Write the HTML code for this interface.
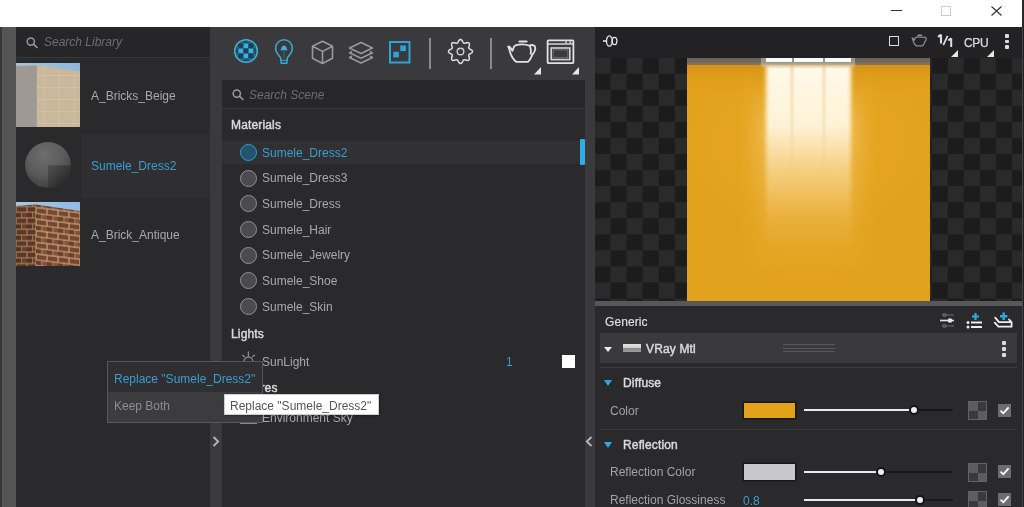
<!DOCTYPE html>
<html><head><meta charset="utf-8">
<style>
*{margin:0;padding:0;box-sizing:border-box}
html,body{width:1024px;height:507px;overflow:hidden;background:#2a292b;font-family:"Liberation Sans",sans-serif}
.a{position:absolute}
.t{will-change:transform;position:absolute;font-size:12px;line-height:14px;white-space:nowrap;color:#a9a9a9}
svg{position:absolute;overflow:visible}
</style></head><body>
<!-- title bar -->
<div class="a" style="left:0;top:0;width:1024px;height:27px;background:#fff"></div>
<div class="a" style="left:891px;top:10px;width:11px;height:1px;background:#333"></div>
<div class="a" style="left:941px;top:6px;width:10px;height:10px;border:1px solid #ccc"></div>
<svg style="left:991px;top:6px" width="11" height="10"><path d="M0.5 0.5L10.5 9.5M10.5 0.5L0.5 9.5" stroke="#333" stroke-width="1.1"/></svg>
<div class="a" style="left:1022px;top:0;width:2px;height:27px;background:#2a2a2a"></div>

<!-- left strip -->
<div class="a" style="left:0;top:27px;width:16px;height:480px;background:#555"></div>
<div class="a" style="left:0;top:27px;width:2px;height:480px;background:#383838"></div>

<!-- library panel -->
<div class="a" style="left:16px;top:27px;width:194px;height:480px;background:#2a292b"></div>
<div class="a" style="left:16px;top:27px;width:194px;height:30px;background:#262527"></div>
<div class="a" style="left:16px;top:57px;width:194px;height:1px;background:#38373a"></div>

<!-- library search -->
<svg style="left:26px;top:37px" width="14" height="12"><circle cx="4.8" cy="4.6" r="3.6" fill="none" stroke="#9a9a9a" stroke-width="1.5"/><path d="M7.4 7.2L11.5 11" stroke="#9a9a9a" stroke-width="1.6"/></svg>
<div class="t" style="left:44px;top:35px;font-style:italic;color:#6e6d6f">Search Library</div>
<!-- row1 -->
<svg style="left:16px;top:63px" width="64" height="64" viewBox="0 0 64 64">
 <defs><linearGradient id="sky1" x1="0" y1="0" x2="1" y2="0.3"><stop offset="0" stop-color="#a9c2d6"/><stop offset="1" stop-color="#8db6df"/></linearGradient>
 <pattern id="bb" width="30" height="12" patternUnits="userSpaceOnUse" x="21" y="1"><path d="M0 11.5H30M7 0V11.5M22 0V11.5" stroke="#ddd1b8" stroke-width="0.9" fill="none" opacity="0.45"/></pattern></defs>
 <rect width="64" height="64" fill="url(#sky1)"/>
 <path d="M20.8 2.3L64 8.5V64H20.8Z" fill="#c9b899"/>
 <path d="M20.8 2.3L64 8.5V64H20.8Z" fill="url(#bb)"/>
 <path d="M0 3L20.8 2.3V64H0Z" fill="#9e9a93"/>
 
</svg>
<div class="t" style="left:91px;top:89px">A_Bricks_Beige</div>
<!-- row2 selected -->
<div class="a" style="left:82px;top:134px;width:128px;height:64px;background:#2f2e31"></div>
<svg style="left:25px;top:141.5px" width="46" height="46" viewBox="0 0 46 46">
 <defs><radialGradient id="sph" cx="0.42" cy="0.28" r="0.8"><stop offset="0" stop-color="#6e6e6e"/><stop offset="0.55" stop-color="#5a5a5a"/><stop offset="1" stop-color="#3a3a3a"/></radialGradient>
 <linearGradient id="sphq" x1="0.1" y1="0.1" x2="0.9" y2="0.9"><stop offset="0" stop-color="#4c4c4c"/><stop offset="0.6" stop-color="#333"/><stop offset="1" stop-color="#222"/></linearGradient></defs>
 <circle cx="23" cy="23" r="22.9" fill="url(#sph)"/>
 <path d="M23 23.3H45.9A22.9 22.9 0 0 1 23 45.9Z" fill="url(#sphq)"/>
</svg>
<div class="t" style="left:91px;top:159px;color:#3a9dd1">Sumele_Dress2</div>
<!-- row3 -->
<svg style="left:16px;top:202px" width="64" height="64" viewBox="0 0 64 64">
 <defs><linearGradient id="sky3" x1="0" y1="0" x2="1" y2="0"><stop offset="0" stop-color="#a8c6df"/><stop offset="1" stop-color="#8fbbe6"/></linearGradient>
 <pattern id="brL" width="11" height="11.4" patternUnits="userSpaceOnUse" x="0" y="4.5"><rect width="11" height="11.4" fill="#b39372"/><rect x="0.6" y="0.6" width="9.8" height="4.6" fill="#6a3d28"/><rect x="6" y="6.3" width="9.8" height="4.5" fill="#77472f"/><rect x="-4.6" y="6.3" width="9.8" height="4.5" fill="#633823"/></pattern>
 <pattern id="brR" width="11" height="11.6" patternUnits="userSpaceOnUse" x="20" y="3" patternTransform="skewY(7)"><rect width="11" height="11.6" fill="#c2a27a"/><rect x="0.6" y="0.7" width="9.8" height="4.7" fill="#774530"/><rect x="6.1" y="6.5" width="9.8" height="4.5" fill="#84513a"/><rect x="-4.9" y="6.5" width="10.3" height="4.5" fill="#6d3e2a"/></pattern></defs>
 <rect width="64" height="64" fill="url(#sky3)"/>
 <path d="M0 4L20 2.5V64H0Z" fill="url(#brL)"/>
 <path d="M20 2.5L64 9V64H20Z" fill="url(#brR)"/>
 <path d="M0 4L20 2.5V64H0Z" fill="#000" opacity="0.1"/>
 <path d="M19.5 2.5V64" stroke="#c9a878" stroke-width="1" opacity="0.45"/>
</svg>
<div class="t" style="left:91px;top:228px">A_Brick_Antique</div>

<!-- splitter 1 -->
<div class="a" style="left:210px;top:27px;width:12px;height:480px;background:#3a393b"></div>
<svg style="left:212px;top:436px" width="8" height="11"><path d="M1.5 1L6.2 5.5L1.5 10" fill="none" stroke="#b8b8b8" stroke-width="1.8"/></svg>

<!-- scene toolbar -->
<div class="a" style="left:210px;top:27px;width:385px;height:53px;background:#3a393b"></div>
<!-- scene panel -->
<div class="a" style="left:222px;top:80px;width:363px;height:427px;background:#2a292b"></div>
<div class="a" style="left:222px;top:80px;width:363px;height:28px;background:#272628"></div>
<div class="a" style="left:222px;top:108px;width:363px;height:1px;background:#38373a"></div>
<svg style="left:232px;top:89px" width="14" height="12"><circle cx="4.8" cy="4.6" r="3.6" fill="none" stroke="#9a9a9a" stroke-width="1.5"/><path d="M7.4 7.2L11.5 11" stroke="#9a9a9a" stroke-width="1.6"/></svg>
<div class="t" style="left:249px;top:88px;font-style:italic;color:#6e6d6f">Search Scene</div>
<div class="t" style="left:231px;top:118px;color:#dadada;-webkit-text-stroke:0.45px #dadada;letter-spacing:0.15px">Materials</div>
<div class="a" style="left:222px;top:141px;width:358px;height:23px;background:#313033"></div>
<div class="a" style="left:580px;top:139px;width:5px;height:26px;background:#2eaee6;border-radius:1px"></div>
<div class="a" style="left:240px;top:143.8px;width:17px;height:17px;border-radius:50%;border:1.5px solid #2f9fd4;background:#24536c"></div>
<div class="t" style="left:262px;top:145.7px;color:#3a9dd1">Sumele_Dress2</div>
<div class="a" style="left:240px;top:169.5px;width:17px;height:17px;border-radius:50%;border:1.3px solid #929193;background:#4b4a4c"></div>
<div class="t" style="left:262px;top:171.4px;color:#a9a9a9">Sumele_Dress3</div>
<div class="a" style="left:240px;top:195.1px;width:17px;height:17px;border-radius:50%;border:1.3px solid #929193;background:#4b4a4c"></div>
<div class="t" style="left:262px;top:197.0px;color:#a9a9a9">Sumele_Dress</div>
<div class="a" style="left:240px;top:220.8px;width:17px;height:17px;border-radius:50%;border:1.3px solid #929193;background:#4b4a4c"></div>
<div class="t" style="left:262px;top:222.7px;color:#a9a9a9">Sumele_Hair</div>
<div class="a" style="left:240px;top:246.5px;width:17px;height:17px;border-radius:50%;border:1.3px solid #929193;background:#4b4a4c"></div>
<div class="t" style="left:262px;top:248.4px;color:#a9a9a9">Sumele_Jewelry</div>
<div class="a" style="left:240px;top:272.2px;width:17px;height:17px;border-radius:50%;border:1.3px solid #929193;background:#4b4a4c"></div>
<div class="t" style="left:262px;top:274.1px;color:#a9a9a9">Sumele_Shoe</div>
<div class="a" style="left:240px;top:297.8px;width:17px;height:17px;border-radius:50%;border:1.3px solid #929193;background:#4b4a4c"></div>
<div class="t" style="left:262px;top:299.7px;color:#a9a9a9">Sumele_Skin</div>
<div class="t" style="left:231px;top:327px;color:#dadada;-webkit-text-stroke:0.45px #dadada;letter-spacing:0.15px">Lights</div>
<svg style="left:238px;top:349px" width="20" height="14" viewBox="0 0 20 14">
 <path d="M6 12.5A4.4 4.4 0 0 1 14.8 12.5" fill="none" stroke="#8e8d8f" stroke-width="1.3"/>
 <path d="M10.4 2.8V7M4.6 6.2L6.4 7.8M16.4 6.2L14.6 7.8" stroke="#8e8d8f" stroke-width="1.3" stroke-linecap="round"/>
</svg>
<div class="t" style="left:262px;top:355px">SunLight</div>
<div class="t" style="left:506px;top:355px;color:#3a9dd1">1</div>
<div class="a" style="left:562px;top:355px;width:13px;height:13px;background:#fff"></div>
<div class="t" style="left:231px;top:381px;color:#dadada;-webkit-text-stroke:0.45px #dadada;letter-spacing:0.15px">Textures</div>
<div class="a" style="left:240px;top:411px;width:17px;height:13px;border:1.5px solid #8a8a8a"></div>
<div class="t" style="left:262px;top:411px">Environment Sky</div>

<!-- splitter 2 -->
<div class="a" style="left:585px;top:27px;width:10px;height:480px;background:#3a393b"></div>
<svg style="left:585px;top:436px" width="8" height="11"><path d="M6.5 1L1.8 5.5L6.5 10" fill="none" stroke="#b8b8b8" stroke-width="1.8"/></svg>

<!-- popup menu -->
<div class="a" style="left:107px;top:361px;width:156px;height:62px;background:#3c3b3d;border:1px solid #58575a"></div>
<div class="a" style="left:108px;top:362px;width:154px;height:30px;background:#2f2e30"></div>
<div class="t" style="left:114px;top:372px;color:#3a9dd1">Replace "Sumele_Dress2"</div>
<div class="t" style="left:114px;top:399px;color:#8e8d8f">Keep Both</div>
<!-- tooltip -->
<div class="a" style="left:224px;top:394px;width:155px;height:21px;background:#fff;border:1px solid #cfcfcf;box-shadow:1px 1px 2px rgba(0,0,0,.3)"></div>
<div class="t" style="left:230px;top:398.6px;color:#555">Replace "Sumele_Dress2"</div>

<!-- right panel -->
<div class="a" style="left:595px;top:27px;width:427px;height:31px;background:#222123"></div>
<svg style="left:595px;top:58px" width="427" height="243"><defs><pattern id="chk" width="32.12" height="32.12" patternUnits="userSpaceOnUse" x="-0.55" y="-0.4"><rect width="32.12" height="32.12" fill="#2a2a2b"/><rect x="16.06" y="0" width="16.06" height="16.06" fill="#1c1c1d"/><rect x="0" y="16.06" width="16.06" height="16.06" fill="#1c1c1d"/></pattern></defs><rect width="427" height="243" fill="url(#chk)"/></svg>
<!-- render -->
<div class="a" style="left:687px;top:58px;width:243px;height:243px;background:#e3a21d;overflow:hidden">
  <div class="a" style="left:-40px;top:0;width:323px;height:243px;background:radial-gradient(ellipse 55% 50% at 50% 35%,rgba(236,170,38,.6),rgba(236,170,38,0) 70%)"></div>
  <div class="a" style="left:0;top:0;width:243px;height:36px;background:linear-gradient(rgba(175,110,10,.4),rgba(190,120,15,.12) 50%,rgba(200,128,15,0))"></div>
  <div class="a" style="left:66px;top:20px;width:110px;height:200px;filter:blur(9px);background:linear-gradient(rgba(250,215,140,0),rgba(250,215,140,.4) 25%,rgba(245,200,110,.3) 55%,rgba(240,190,90,0))"></div>
  <div class="a" style="left:79px;top:5px;width:85px;height:190px;filter:blur(2px);background:linear-gradient(rgba(255,250,235,1),rgba(255,246,224,.95) 32%,rgba(250,222,165,.66) 56%,rgba(245,200,110,.25) 80%,rgba(240,190,90,0))"></div>
  <div class="a" style="left:104px;top:6px;width:2px;height:120px;filter:blur(0.8px);background:linear-gradient(rgba(225,180,95,.6),rgba(225,180,95,0))"></div>
  <div class="a" style="left:136px;top:6px;width:2px;height:120px;filter:blur(0.8px);background:linear-gradient(rgba(225,180,95,.6),rgba(225,180,95,0))"></div>
  <div class="a" style="left:0;top:0;width:243px;height:7px;background:linear-gradient(#6a5f53,#7b6d5c 70%,#8a7658)"></div>
  <div class="a" style="left:74px;top:0;width:94px;height:6.5px;background:#9a968f"></div>
  <div class="a" style="left:74px;top:6px;width:94px;height:3px;filter:blur(1px);background:rgba(215,185,130,.8)"></div>
  <div class="a" style="left:78.5px;top:0.3px;width:26.5px;height:4px;background:#f9f9f7"></div>
  <div class="a" style="left:106.5px;top:0.3px;width:29.5px;height:4px;background:#f9f9f7"></div>
  <div class="a" style="left:138px;top:0.3px;width:26px;height:4px;background:#f9f9f7"></div>
</div>
<div class="a" style="left:595px;top:301px;width:427px;height:5px;background:#58575a"></div>
<!-- right toolbar icons -->
<svg style="left:600px;top:32px" width="20" height="18" viewBox="0 0 20 18">
 <path d="M3 9H6.5" stroke="#e6e6e6" stroke-width="1.6"/>
 <ellipse cx="9.4" cy="9" rx="2.9" ry="5.2" fill="none" stroke="#e6e6e6" stroke-width="1.3"/>
 <path d="M10.2 5.5A2 3.6 0 0 1 10.2 12.5" fill="none" stroke="#8a8a8a" stroke-width="1"/>
 <ellipse cx="14.5" cy="9" rx="2.4" ry="3.6" fill="none" stroke="#e6e6e6" stroke-width="1.3"/>
</svg>
<div class="a" style="left:889px;top:36px;width:10px;height:10px;border:1.4px solid #dcdcdc"></div>
<svg style="left:911px;top:33.5px" width="16.6" height="13" viewBox="0 0 32 25">
 <path d="M13.5 2.5H20.5" stroke="#8c8c8c" stroke-width="3" stroke-linecap="round"/>
 <path d="M2.2 7.5C4 7.3 5 9 6.5 11.8L8.2 7.3C11 4.8 19.5 4.8 23.5 6.8C24.8 5.8 26.5 5.8 28 6.6C30.2 8 29.5 12 26.3 15.8C25 18.5 24.5 21 22 22.8H10.2C7.5 21 4.5 16 3.8 12C3.3 10 3 8.8 2.2 7.5Z" fill="none" stroke="#8c8c8c" stroke-width="2.5" stroke-linejoin="round"/>
</svg>
<svg style="left:930px;top:30px" width="30" height="20" viewBox="930 30 30 20">
 <path d="M941 34.4V43.4M938 36.8L941 34.6" fill="none" stroke="#dedede" stroke-width="2.1"/>
 <path d="M943.3 45.2L947.6 35.8" fill="none" stroke="#dedede" stroke-width="1.7"/>
 <path d="M951.2 38.2V46.9M948.2 40.5L951.2 38.4" fill="none" stroke="#dedede" stroke-width="2"/>
</svg>

<div class="t" style="left:963.5px;top:36px;font-size:12px;color:#ddd;-webkit-text-stroke:0.25px #ddd;letter-spacing:-0.3px">CPU</div>
<svg style="left:951px;top:50px" width="8" height="8"><path d="M7 0V7H0Z" fill="#e6e6e6"/></svg>
<svg style="left:987px;top:50px" width="8" height="8"><path d="M7 0V7H0Z" fill="#e6e6e6"/></svg>
<div class="a" style="left:1005px;top:34px;width:4px;height:3.5px;background:#ddd;border-radius:1px"></div>
<div class="a" style="left:1005px;top:39.5px;width:4px;height:3.5px;background:#ddd;border-radius:1px"></div>
<div class="a" style="left:1005px;top:45px;width:4px;height:3.5px;background:#ddd;border-radius:1px"></div>

<!-- properties -->
<div class="a" style="left:595px;top:306px;width:427px;height:201px;background:#2a292b"></div>
<div class="t" style="left:605px;top:314.6px;color:#dedede;-webkit-text-stroke:0.2px #dedede;letter-spacing:0.1px">Generic</div>
<div class="a" style="left:600px;top:333px;width:417px;height:30px;background:#3a393b"></div>
<svg style="left:604px;top:347px" width="8" height="5"><path d="M0 0H8L4 5Z" fill="#eee"/></svg>
<div class="a" style="left:623px;top:344px;width:18px;height:8px;background:linear-gradient(#e2e2e2,#d0d0d0 45%,#8c8c8c 50%,#9c9c9c)"></div>
<div class="t" style="left:646px;top:342px;color:#dadada;-webkit-text-stroke:0.45px #dadada;letter-spacing:0.15px">VRay Mtl</div>
<div class="a" style="left:783px;top:344px;width:52px;height:1px;background:#58575a"></div>
<div class="a" style="left:783px;top:347.5px;width:52px;height:1px;background:#58575a"></div>
<div class="a" style="left:783px;top:351px;width:52px;height:1px;background:#58575a"></div>
<div class="a" style="left:1002px;top:341px;width:4px;height:3.5px;background:#ddd;border-radius:1px"></div>
<div class="a" style="left:1002px;top:347px;width:4px;height:3.5px;background:#ddd;border-radius:1px"></div>
<div class="a" style="left:1002px;top:353px;width:4px;height:3.5px;background:#ddd;border-radius:1px"></div>
<div class="a" style="left:600px;top:367px;width:417px;height:1px;background:#3a393b"></div>
<svg style="left:604px;top:380px" width="8" height="6"><path d="M0 0H8L4 6Z" fill="#2ea8e3"/></svg>
<div class="t" style="left:623px;top:376px;color:#dadada;-webkit-text-stroke:0.45px #dadada;letter-spacing:0.15px">Diffuse</div>
<div class="t" style="left:610px;top:404px;color:#a3a3a4">Color</div>
<div class="a" style="left:743.5px;top:402.5px;width:51.5px;height:15.5px;background:#e3a21a;box-shadow:0 0 0 1.5px #181818"></div>
<div class="a" style="left:804px;top:409px;width:109.5px;height:2px;background:#eaeaea"></div>
<div class="a" style="left:913.5px;top:409px;width:39.5px;height:1.5px;background:#19191a"></div>
<div class="a" style="left:910.5px;top:407px;width:6px;height:6px;border-radius:50%;background:#eee;box-shadow:0 0 0 2px #151515"></div>
<div class="a" style="left:968px;top:401px;width:19px;height:19px;background:#5d5c5e;border:1px solid #636264"></div>
<div class="a" style="left:977.5px;top:402px;width:8.5px;height:8.5px;background:#3a393b"></div>
<div class="a" style="left:969px;top:410.5px;width:8.5px;height:8.5px;background:#3a393b"></div>
<div class="a" style="left:998px;top:404px;width:13px;height:13px;background:#6d6c6e"></div>
<svg style="left:998px;top:404px" width="13" height="13"><path d="M2.6 6.6L5.3 9.3L10.6 3.3" fill="none" stroke="#fff" stroke-width="1.8"/></svg>
<div class="a" style="left:600px;top:429px;width:417px;height:1px;background:#3a393b"></div>
<svg style="left:604px;top:441.5px" width="8" height="6"><path d="M0 0H8L4 6Z" fill="#2ea8e3"/></svg>
<div class="t" style="left:623px;top:437.5px;color:#dadada;-webkit-text-stroke:0.45px #dadada;letter-spacing:0.15px">Reflection</div>
<div class="t" style="left:610px;top:465px;color:#a3a3a4">Reflection Color</div>
<div class="a" style="left:743.5px;top:464px;width:51.5px;height:15.5px;background:#c8c7c9;box-shadow:0 0 0 1.5px #181818"></div>
<div class="a" style="left:804px;top:471px;width:77px;height:2px;background:#eaeaea"></div>
<div class="a" style="left:881px;top:471px;width:72px;height:1.5px;background:#19191a"></div>
<div class="a" style="left:878.0px;top:469.0px;width:6px;height:6px;border-radius:50%;background:#eee;box-shadow:0 0 0 2px #151515"></div>
<div class="a" style="left:968px;top:463px;width:19px;height:19px;background:#5d5c5e;border:1px solid #636264"></div>
<div class="a" style="left:977.5px;top:464px;width:8.5px;height:8.5px;background:#3a393b"></div>
<div class="a" style="left:969px;top:472.5px;width:8.5px;height:8.5px;background:#3a393b"></div>
<div class="a" style="left:998px;top:465px;width:13px;height:13px;background:#6d6c6e"></div>
<svg style="left:998px;top:465px" width="13" height="13"><path d="M2.6 6.6L5.3 9.3L10.6 3.3" fill="none" stroke="#fff" stroke-width="1.8"/></svg>
<div class="t" style="left:610px;top:493px;color:#a3a3a4">Reflection Glossiness</div>
<div class="t" style="left:743px;top:493.5px;color:#3a9dd1">0.8</div>
<div class="a" style="left:804px;top:499px;width:116px;height:2px;background:#eaeaea"></div>
<div class="a" style="left:920px;top:499px;width:33px;height:1.5px;background:#19191a"></div>
<div class="a" style="left:917.0px;top:497.0px;width:6px;height:6px;border-radius:50%;background:#eee;box-shadow:0 0 0 2px #151515"></div>
<div class="a" style="left:968px;top:491px;width:19px;height:19px;background:#5d5c5e;border:1px solid #636264"></div>
<div class="a" style="left:977.5px;top:492px;width:8.5px;height:8.5px;background:#3a393b"></div>
<div class="a" style="left:969px;top:500.5px;width:8.5px;height:8.5px;background:#3a393b"></div>
<div class="a" style="left:998px;top:493px;width:13px;height:13px;background:#6d6c6e"></div>
<svg style="left:998px;top:493px" width="13" height="13"><path d="M2.6 6.6L5.3 9.3L10.6 3.3" fill="none" stroke="#fff" stroke-width="1.8"/></svg>

<!-- scene toolbar icons -->
<svg style="left:233px;top:38px" width="26" height="26" viewBox="0 0 26 26">
 <defs><clipPath id="cc"><circle cx="13" cy="13" r="10.2"/></clipPath></defs>
 <g clip-path="url(#cc)"><rect x="0.5" y="0.5" width="5" height="5" fill="#1f5573"/><rect x="5.5" y="0.5" width="5" height="5" fill="#2c8fbf"/><rect x="10.5" y="0.5" width="5" height="5" fill="#1f5573"/><rect x="15.5" y="0.5" width="5" height="5" fill="#2c8fbf"/><rect x="20.5" y="0.5" width="5" height="5" fill="#1f5573"/><rect x="0.5" y="5.5" width="5" height="5" fill="#2c8fbf"/><rect x="5.5" y="5.5" width="5" height="5" fill="#1b3f53"/><rect x="10.5" y="5.5" width="5" height="5" fill="#36b0e6"/><rect x="15.5" y="5.5" width="5" height="5" fill="#1b3f53"/><rect x="20.5" y="5.5" width="5" height="5" fill="#2c8fbf"/><rect x="0.5" y="10.5" width="5" height="5" fill="#1f5573"/><rect x="5.5" y="10.5" width="5" height="5" fill="#36b0e6"/><rect x="10.5" y="10.5" width="5" height="5" fill="#1b3f53"/><rect x="15.5" y="10.5" width="5" height="5" fill="#36b0e6"/><rect x="20.5" y="10.5" width="5" height="5" fill="#1f5573"/><rect x="0.5" y="15.5" width="5" height="5" fill="#2c8fbf"/><rect x="5.5" y="15.5" width="5" height="5" fill="#1b3f53"/><rect x="10.5" y="15.5" width="5" height="5" fill="#36b0e6"/><rect x="15.5" y="15.5" width="5" height="5" fill="#1b3f53"/><rect x="20.5" y="15.5" width="5" height="5" fill="#2c8fbf"/><rect x="0.5" y="20.5" width="5" height="5" fill="#1f5573"/><rect x="5.5" y="20.5" width="5" height="5" fill="#2c8fbf"/><rect x="10.5" y="20.5" width="5" height="5" fill="#1f5573"/><rect x="15.5" y="20.5" width="5" height="5" fill="#2c8fbf"/><rect x="20.5" y="20.5" width="5" height="5" fill="#1f5573"/></g>
 <circle cx="13" cy="13" r="9.6" fill="none" stroke="#1a3a4c" stroke-width="0.8" opacity="0.6"/>
 <circle cx="13" cy="13" r="11.3" fill="none" stroke="#3fb0e0" stroke-width="1.5"/>
</svg>
<svg style="left:273px;top:38px" width="22" height="27" viewBox="0 0 22 27">
 <path d="M8.3 25.3L7.6 19.8C7.2 18.2 2.6 15.5 2.6 10.2A8.4 8.4 0 0 1 19.4 10.2C19.4 15.5 14.8 18.2 14.4 19.8L13.7 25.3Z" fill="none" stroke="#36a9df" stroke-width="1.5" stroke-linejoin="round"/>
 <path d="M8 22.3H14" stroke="#36a9df" stroke-width="1.1"/>
 <path d="M7.2 12.2H14.8L13.6 10.5C13.4 9 12.5 7.6 11 7.6S8.6 9 8.4 10.5Z" fill="#3cb3e8"/>
 <path d="M11 13V20" stroke="#3a6f8c" stroke-width="1"/>
</svg>
<svg style="left:311px;top:40px" width="23" height="25" viewBox="0 0 23 25">
 <path d="M11.5 1.2L21.5 6.2V18.3L11.5 23.5L1.5 18.3V6.2Z M1.5 6.2L11.5 11.4L21.5 6.2 M11.5 11.4V23.5" fill="none" stroke="#9a999b" stroke-width="1.6" stroke-linejoin="round"/>
</svg>
<svg style="left:347px;top:41px" width="28" height="23" viewBox="0 0 28 23">
 <path d="M14 1.5L25.5 7L14 12.5L2.5 7Z" fill="none" stroke="#9a999b" stroke-width="1.5" stroke-linejoin="round"/>
 <path d="M5 10.5L2.5 11.8L14 17.3L25.5 11.8L23 10.5" fill="none" stroke="#9a999b" stroke-width="1.5" stroke-linejoin="round"/>
 <path d="M5 15.3L2.5 16.5L14 22L25.5 16.5L23 15.3" fill="none" stroke="#9a999b" stroke-width="1.5" stroke-linejoin="round"/>
</svg>
<svg style="left:388px;top:40px" width="23" height="24" viewBox="0 0 23 24">
 <rect x="2" y="2" width="19.5" height="20.5" fill="none" stroke="#2ea3db" stroke-width="2"/>
 <rect x="12.3" y="5.5" width="5.6" height="5.6" fill="#2ea3db"/>
 <rect x="5.3" y="11.8" width="5.6" height="5.6" fill="#2ea3db"/>
</svg>
<div class="a" style="left:429px;top:37.5px;width:2px;height:31.5px;background:#8a898b"></div>
<svg style="left:446px;top:37px" width="29" height="29" viewBox="0 0 29 29">
 <path id="gear" fill="none" stroke="#e0e0e0" stroke-width="1.5" stroke-linejoin="round" d="M26.50 14.50L26.46 14.81L26.34 15.12L26.15 15.42L25.90 15.70L25.59 15.96L25.25 16.20L24.88 16.42L24.52 16.63L24.16 16.82L23.82 17.00L23.53 17.17L23.27 17.35L23.07 17.54L22.92 17.73L22.81 17.94L22.74 18.17L22.71 18.42L22.72 18.69L22.77 18.99L22.86 19.33L22.97 19.69L23.09 20.08L23.20 20.48L23.30 20.90L23.37 21.31L23.41 21.71L23.39 22.09L23.31 22.43L23.18 22.74L22.99 22.99L22.74 23.18L22.43 23.31L22.09 23.39L21.71 23.41L21.31 23.37L20.90 23.30L20.48 23.20L20.08 23.09L19.69 22.97L19.33 22.86L18.99 22.77L18.69 22.72L18.42 22.71L18.17 22.74L17.94 22.81L17.73 22.92L17.54 23.07L17.35 23.27L17.17 23.53L17.00 23.82L16.82 24.16L16.63 24.52L16.42 24.88L16.20 25.25L15.96 25.59L15.70 25.90L15.42 26.15L15.12 26.34L14.81 26.46L14.50 26.50L14.19 26.46L13.88 26.34L13.58 26.15L13.30 25.90L13.04 25.59L12.80 25.25L12.58 24.88L12.37 24.52L12.18 24.16L12.00 23.82L11.83 23.53L11.65 23.27L11.46 23.07L11.27 22.92L11.06 22.81L10.83 22.74L10.58 22.71L10.31 22.72L10.01 22.77L9.67 22.86L9.31 22.97L8.92 23.09L8.52 23.20L8.10 23.30L7.69 23.37L7.29 23.41L6.91 23.39L6.57 23.31L6.26 23.18L6.01 22.99L5.82 22.74L5.69 22.43L5.61 22.09L5.59 21.71L5.63 21.31L5.70 20.90L5.80 20.48L5.91 20.08L6.03 19.69L6.14 19.33L6.23 18.99L6.28 18.69L6.29 18.42L6.26 18.17L6.19 17.94L6.08 17.73L5.93 17.54L5.73 17.35L5.47 17.17L5.18 17.00L4.84 16.82L4.48 16.63L4.12 16.42L3.75 16.20L3.41 15.96L3.10 15.70L2.85 15.42L2.66 15.12L2.54 14.81L2.50 14.50L2.54 14.19L2.66 13.88L2.85 13.58L3.10 13.30L3.41 13.04L3.75 12.80L4.12 12.58L4.48 12.37L4.84 12.18L5.18 12.00L5.47 11.83L5.73 11.65L5.93 11.46L6.08 11.27L6.19 11.06L6.26 10.83L6.29 10.58L6.28 10.31L6.23 10.01L6.14 9.67L6.03 9.31L5.91 8.92L5.80 8.52L5.70 8.10L5.63 7.69L5.59 7.29L5.61 6.91L5.69 6.57L5.82 6.26L6.01 6.01L6.26 5.82L6.57 5.69L6.91 5.61L7.29 5.59L7.69 5.63L8.10 5.70L8.52 5.80L8.92 5.91L9.31 6.03L9.67 6.14L10.01 6.23L10.31 6.28L10.58 6.29L10.83 6.26L11.06 6.19L11.27 6.08L11.46 5.93L11.65 5.73L11.83 5.47L12.00 5.18L12.18 4.84L12.37 4.48L12.58 4.12L12.80 3.75L13.04 3.41L13.30 3.10L13.58 2.85L13.88 2.66L14.19 2.54L14.50 2.50L14.81 2.54L15.12 2.66L15.42 2.85L15.70 3.10L15.96 3.41L16.20 3.75L16.42 4.12L16.63 4.48L16.82 4.84L17.00 5.18L17.17 5.47L17.35 5.73L17.54 5.93L17.73 6.08L17.94 6.19L18.17 6.26L18.42 6.29L18.69 6.28L18.99 6.23L19.33 6.14L19.69 6.03L20.08 5.91L20.48 5.80L20.90 5.70L21.31 5.63L21.71 5.59L22.09 5.61L22.43 5.69L22.74 5.82L22.99 6.01L23.18 6.26L23.31 6.57L23.39 6.91L23.41 7.29L23.37 7.69L23.30 8.10L23.20 8.52L23.09 8.92L22.97 9.31L22.86 9.67L22.77 10.01L22.72 10.31L22.71 10.58L22.74 10.83L22.81 11.06L22.92 11.27L23.07 11.46L23.27 11.65L23.53 11.83L23.82 12.00L24.16 12.18L24.52 12.37L24.88 12.58L25.25 12.80L25.59 13.04L25.90 13.30L26.15 13.58L26.34 13.88L26.46 14.19Z"/>
 <circle cx="14.5" cy="14.5" r="3.3" fill="none" stroke="#cfcfcf" stroke-width="1.4"/>
</svg>
<div class="a" style="left:490px;top:37.5px;width:2px;height:31.5px;background:#8a898b"></div>
<svg style="left:506px;top:39px" width="32" height="25" viewBox="0 0 32 25">
 <path d="M13.5 2.5H20.5" stroke="#e0e0e0" stroke-width="2.2" stroke-linecap="round"/>
 <path d="M2.2 7.5C4 7.3 5 9 6.5 11.8L8.2 7.3C11 4.8 19.5 4.8 23.5 6.8C24.8 5.8 26.5 5.8 28 6.6C30.2 8 29.5 12 26.3 15.8C25 18.5 24.5 21 22 22.8H10.2C7.5 21 4.5 16 3.8 12C3.3 10 3 8.8 2.2 7.5Z M23.5 6.8C25 9 25.3 12 24.5 15.5 M26.3 15.8" fill="none" stroke="#e2e2e2" stroke-width="1.8" stroke-linejoin="round"/>
</svg>
<svg style="left:546px;top:39px" width="29" height="26" viewBox="0 0 29 26">
 <rect x="1.6" y="1.4" width="25.8" height="22.8" rx="1" fill="none" stroke="#e2e2e2" stroke-width="1.8"/>
 <path d="M1.5 5H27.5" stroke="#e2e2e2" stroke-width="1.4"/>
 <rect x="5.2" y="9" width="18.6" height="11.6" fill="none" stroke="#d4d4d4" stroke-width="1.6"/>
 <rect x="7.2" y="10.9" width="14.6" height="7.8" fill="none" stroke="#6e6e6e" stroke-width="1"/>
 <circle cx="20" cy="3.2" r="0.9" fill="#e2e2e2"/><circle cx="24.3" cy="3.2" r="0.9" fill="#e2e2e2"/>
</svg>
<svg style="left:534px;top:67px" width="8" height="8"><path d="M7 0V7.5H0Z" fill="#e6e6e6"/></svg>
<svg style="left:572px;top:67px" width="8" height="8"><path d="M7 0V7.5H0Z" fill="#e6e6e6"/></svg>

<!-- generic header icons -->
<svg style="left:939px;top:312px" width="17" height="17" viewBox="0 0 17 17">
 <path d="M1 8.5H15" stroke="#e6e6e6" stroke-width="1.6"/><circle cx="11" cy="8.5" r="2.3" fill="#e6e6e6"/>
 <path d="M3 3H15M3 14H15" stroke="#707070" stroke-width="1.1"/><circle cx="5.5" cy="3" r="1.6" fill="none" stroke="#707070" stroke-width="1"/><circle cx="5.5" cy="14" r="1.6" fill="none" stroke="#707070" stroke-width="1"/>
</svg>
<svg style="left:966px;top:312px" width="18" height="17" viewBox="0 0 18 17">
 <path d="M9.5 1V8M6 4.5H13" stroke="#2ea8e3" stroke-width="2.2"/>
 <circle cx="2" cy="10.5" r="1.5" fill="#eee"/><circle cx="2" cy="15" r="1.5" fill="#eee"/>
 <path d="M5 10.5H16M5 15H16" stroke="#eee" stroke-width="2"/>
</svg>
<svg style="left:993px;top:312px" width="21" height="17" viewBox="0 0 21 17">
 <path d="M10.7 0.6V8M7 4.3H14.4" stroke="#2ea8e3" stroke-width="2.4"/>
 <path d="M2.2 5.7L6 10.2H18.6L16 7.5" fill="none" stroke="#eee" stroke-width="1.8" stroke-linejoin="round" stroke-linecap="round"/>
 <path d="M1.7 10.7L5.5 14.7H18.6V11.5" fill="none" stroke="#eee" stroke-width="1.8" stroke-linejoin="round" stroke-linecap="round"/>
</svg>
<div class="a" style="left:1022px;top:27px;width:1px;height:480px;background:#444345"></div>
<div class="a" style="left:1023px;top:27px;width:1px;height:480px;background:#222"></div>
</body></html>
